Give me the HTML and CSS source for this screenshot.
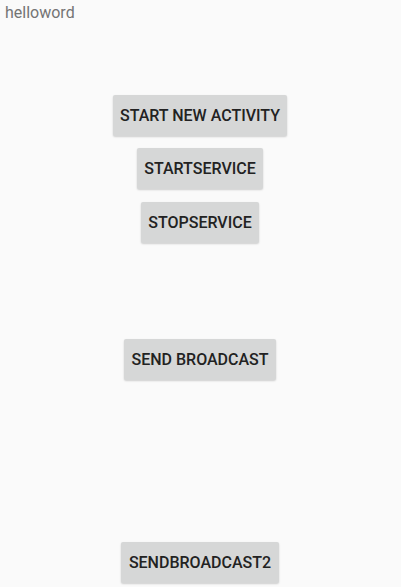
FILE: index.html
```html
<!DOCTYPE html>
<html lang="en">

<head>
    <meta charset="UTF-8">
    <meta name="viewport" content="width=device-width, initial-scale=1.0">
    <title>helloword</title>
    <link rel="stylesheet" href="styles.css">
</head>

<body>
    <div class="title">helloword</div>
    <div class="main">
        <button class="btn" id="newact">START NEW ACTIVITY</button>
        <button class="btn" id="start">STARTSERVICE</button>
        <button class="btn" id="stop">STOPSERVICE</button>
        <button class="btn" id="send">SEND BROADCAST</button>
        <button class="btn" id="send2">SENDBROADCAST2</button>
    </div>
</body>

</html>
```

FILE: styles.css
```css
body {
    margin: 0;
    width: 401px;
    height: 587px;
    overflow: hidden;
    background-color: #fafafa;
    font-family: Roboto, "Liberation Sans", sans-serif;
}

.title {
    height: 30px;
    padding-top: 1px;
    padding-left: 5px;
    box-sizing: border-box;
    font-size: 16px;
    line-height: 24px;
    color: #747474;
}

.main {
    display: flex;
    flex-direction: column;
    align-items: center;
    padding-right: 1px;
}

.btn {
    height: 41px;
    padding: 0 7.5px;
    border: none;
    border-radius: 2px;
    background-color: #d6d7d7;
    box-shadow: 0 1px 2px rgba(0, 0, 0, 0.18);
    font-family: Roboto, "Liberation Sans", sans-serif;
    font-weight: 500;
    font-size: 16px;
    color: #222;
}

#newact {
    margin-top: 65px;
}

#start {
    margin-top: 12px;
}

#stop {
    margin-top: 13px;
}

#send {
    margin-top: 96px;
}

#send2 {
    margin-top: 162px;
}
```
